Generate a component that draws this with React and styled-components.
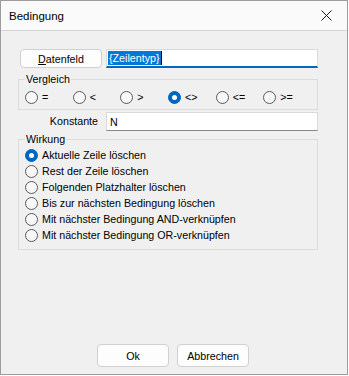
import React from 'react'
import styled, { createGlobalStyle } from 'styled-components'

const Global = createGlobalStyle`
  html, body { margin: 0; padding: 0; background: #ffffff; }
  body { font-family: "Liberation Sans", Arial, sans-serif; font-size: 10.7px; color: #000; }
`

const Window = styled.div`
  width: 348px;
  height: 375px;
  box-sizing: border-box;
  border: 1px solid #9c9c9c;
  display: flex;
  flex-direction: column;
  background: #f0f0f0;
`

const TitleBar = styled.div`
  height: 29px;
  flex: none;
  background: #fafafa;
  border-bottom: 1px solid #d4d4d4;
  display: flex;
  align-items: center;
  justify-content: space-between;
  padding: 0 15px 0 8px;
  font-size: 11.5px;
`

const CloseIcon = () => (
  <svg width="11" height="11" viewBox="0 0 11 11">
    <path d="M0.5 0.5 L10.5 10.5 M10.5 0.5 L0.5 10.5" stroke="#1a1a1a" strokeWidth="1" fill="none" />
  </svg>
)

const Body = styled.div`
  flex: 1;
  display: flex;
  flex-direction: column;
  padding: 18px 28px 7px 17px;
`

const Row = styled.div`
  display: grid;
  grid-template-columns: 84px 212px;
  column-gap: 4px;
  height: 19px;
  margin-top: ${p => p.$mt || 0}px;
`

const Button = styled.button`
  font: inherit;
  color: #000;
  background: #fdfdfd;
  border: 1px solid #d0d0d0;
  border-radius: 4px;
  padding: 0;
  width: ${p => p.$w || 72}px;
  height: ${p => p.$h || 23}px;
  margin-left: ${p => p.$ml || 0}px;
  u { text-decoration: underline; }
`

const Field = styled.div`
  background: #ffffff;
  border: 1px solid #dadada;
  border-bottom: ${p => (p.$focus ? '2px solid #0067c0' : '1px solid #888888')};
  box-sizing: border-box;
  height: 19px;
  display: flex;
  align-items: center;
  padding-left: ${p => (p.$focus ? 1 : 3)}px;
`

const Selected = styled.span`
  background: #0078d7;
  color: #fff;
  line-height: 14px;
  padding: 0 1px;
`

const Caret = styled.span`
  width: 1px;
  height: 14px;
  background: #000;
`

const Label = styled.div`
  text-align: right;
  padding-right: 4px;
  line-height: 19px;
`

const Group = styled.fieldset`
  margin: ${p => p.$mt || 0}px 0 0 0;
  width: 300px;
  box-sizing: border-box;
  border: 1px solid #dcdcdc;
  padding: ${p => p.$pt}px 6px ${p => p.$pb || 5}px 6px;
  min-width: 0;
`

const Legend = styled.legend`
  padding: 0 1px;
  line-height: 12px;
`

const RadioLine = styled.div`
  display: flex;
`

const RadioList = styled.div`
  display: flex;
  flex-direction: column;
`

const Radio = styled.label`
  display: flex;
  align-items: center;
  gap: 4px;
  height: ${p => p.$h || 16}px;
  width: ${p => (p.$w ? p.$w + 'px' : 'auto')};
  white-space: nowrap;
`

const Circle = styled.span`
  flex: none;
  width: 13px;
  height: 13px;
  box-sizing: border-box;
  border-radius: 50%;
  border: 1px solid ${p => (p.$checked ? '#0067c0' : '#5a5a5a')};
  background: ${p => (p.$checked ? '#0067c0' : '#f7f7f7')};
  display: flex;
  align-items: center;
  justify-content: center;
  &::after {
    content: '';
    display: ${p => (p.$checked ? 'block' : 'none')};
    width: 5px;
    height: 5px;
    border-radius: 50%;
    background: #fff;
  }
`

const Footer = styled.div`
  margin-top: auto;
  display: flex;
  justify-content: center;
  gap: 8px;
  padding-left: 9px;
`

const compare = ['=', '<', '>', '<>', '<=', '>=']
const effects = [
  'Aktuelle Zeile löschen',
  'Rest der Zeile löschen',
  'Folgenden Platzhalter löschen',
  'Bis zur nächsten Bedingung löschen',
  'Mit nächster Bedingung AND-verknüpfen',
  'Mit nächster Bedingung OR-verknüpfen',
]

export default function App() {
  return (
    <>
      <Global />
      <Window>
        <TitleBar>
          <span>Bedingung</span>
          <CloseIcon />
        </TitleBar>
        <Body>
          <Row>
            <Button $w={82} $h={19} $ml={2}><u>D</u>atenfeld</Button>
            <Field $focus>
              <Selected>{'{Zeilentyp}'}</Selected>
              <Caret />
            </Field>
          </Row>

          <Group $mt={5} $pt={5}>
            <Legend>Vergleich</Legend>
            <RadioLine>
              {compare.map((c, i) => (
                <Radio key={i} $w={48} $h={14}>
                  <Circle $checked={i === 3} />
                  {c}
                </Radio>
              ))}
            </RadioLine>
          </Group>

          <Row $mt={2}>
            <Label>Konstante</Label>
            <Field>N</Field>
          </Row>

          <Group $mt={2} $pt={2} $pb={6}>
            <Legend>Wirkung</Legend>
            <RadioList>
              {effects.map((e, i) => (
                <Radio key={i}>
                  <Circle $checked={i === 0} />
                  {e}
                </Radio>
              ))}
            </RadioList>
          </Group>

          <Footer>
            <Button>Ok</Button>
            <Button>Abbrechen</Button>
          </Footer>
        </Body>
      </Window>
    </>
  )
}
